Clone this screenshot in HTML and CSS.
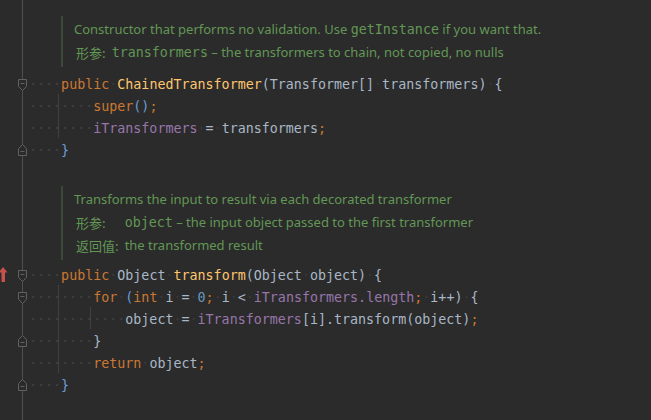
FILE: index.html
```html
<!DOCTYPE html>
<html>
<head>
<meta charset="utf-8">
<link rel="stylesheet" href="styles.css">
</head>
<body>
<div class="editor">
  <div class="doc doc1">
    <div class="dline">Constructor that performs no validation. Use <span class="dcode">getInstance</span> if you want that.</div>
    <div class="dtable">
      <span class="lbl">形参:</span><span><span class="dcode">transformers</span> – the transformers to chain, not copied, no nulls</span>
    </div>
  </div>

  <div class="line">
    <div class="gut"><span class="slot"></span><svg class="fold open" width="9" height="12" viewBox="0 0 9 12"><path d="M0.5 0.5H8.5V7.5L4.5 11.5L0.5 7.5Z"/><path d="M2.5 4.5H6.5"/></svg></div>
    <div class="code"><span class="ws">····</span><span class="kw">public</span><span class="sp">·</span><span class="fn">ChainedTransformer</span>(Transformer[]<span class="sp">·</span>transformers)<span class="sp">·</span>{</div>
  </div>
  <div class="line">
    <div class="gut"></div>
    <div class="code g1"><span class="ws">········</span><span class="kw">super</span><span class="br">()</span><span class="kw">;</span></div>
  </div>
  <div class="line">
    <div class="gut"></div>
    <div class="code g1"><span class="ws">········</span><span class="fld">iTransformers</span><span class="sp">·</span>=<span class="sp">·</span>transformers<span class="kw">;</span></div>
  </div>
  <div class="line">
    <div class="gut"><span class="slot"></span><svg class="fold close" width="9" height="12" viewBox="0 0 9 12"><path d="M0.5 11.5H8.5V4.5L4.5 0.5L0.5 4.5Z"/><path d="M2.5 7.5H6.5"/></svg></div>
    <div class="code"><span class="ws">····</span><span class="br">}</span></div>
  </div>

  <div class="doc doc2">
    <div class="dline">Transforms the input to result via each decorated transformer</div>
    <div class="dtable">
      <span class="lbl">形参:</span><span><span class="dcode">object</span> – the input object passed to the first transformer</span>
      <span class="lbl">返回值:</span><span>the transformed result</span>
    </div>
  </div>

  <div class="line">
    <div class="gut"><span class="slot"><svg class="impl" width="8" height="16" viewBox="0 0 8 16"><path d="M3 0L7.5 5.5H5V15H1.5V5.5H-1.5Z"/></svg></span><svg class="fold open" width="9" height="12" viewBox="0 0 9 12"><path d="M0.5 0.5H8.5V7.5L4.5 11.5L0.5 7.5Z"/><path d="M2.5 4.5H6.5"/></svg></div>
    <div class="code"><span class="ws">····</span><span class="kw">public</span><span class="sp">·</span><span class="ty">Object</span><span class="sp">·</span><span class="fn">transform</span>(Object<span class="sp">·</span>object)<span class="sp">·</span>{</div>
  </div>
  <div class="line">
    <div class="gut"><span class="slot"></span><svg class="fold open" width="9" height="12" viewBox="0 0 9 12"><path d="M0.5 0.5H8.5V7.5L4.5 11.5L0.5 7.5Z"/><path d="M2.5 4.5H6.5"/></svg></div>
    <div class="code g1"><span class="ws">········</span><span class="kw">for</span><span class="sp">·</span><span class="br">(</span><span class="kw">int</span><span class="sp">·</span>i<span class="sp">·</span>=<span class="sp">·</span><span class="num">0</span><span class="kw">;</span><span class="sp">·</span>i<span class="sp">·</span>&lt;<span class="sp">·</span><span class="fld">iTransformers.length</span><span class="kw">;</span><span class="sp">·</span>i++)<span class="sp">·</span>{</div>
  </div>
  <div class="line">
    <div class="gut"></div>
    <div class="code g1 g2"><span class="ws">············</span>object<span class="sp">·</span>=<span class="sp">·</span><span class="fld">iTransformers</span>[i].transform(object)<span class="kw">;</span></div>
  </div>
  <div class="line">
    <div class="gut"><span class="slot"></span><svg class="fold close" width="9" height="12" viewBox="0 0 9 12"><path d="M0.5 11.5H8.5V4.5L4.5 0.5L0.5 4.5Z"/><path d="M2.5 7.5H6.5"/></svg></div>
    <div class="code g1"><span class="ws">········</span>}</div>
  </div>
  <div class="line">
    <div class="gut"></div>
    <div class="code g1"><span class="ws">········</span><span class="kw">return</span><span class="sp">·</span>object<span class="kw">;</span></div>
  </div>
  <div class="line">
    <div class="gut"><span class="slot"></span><svg class="fold close" width="9" height="12" viewBox="0 0 9 12"><path d="M0.5 11.5H8.5V4.5L4.5 0.5L0.5 4.5Z"/><path d="M2.5 7.5H6.5"/></svg></div>
    <div class="code"><span class="ws">····</span><span class="br">}</span></div>
  </div>
</div>
</body>
</html>
```
FILE: styles.css
```css
html, body {
  margin: 0;
  padding: 0;
  background: #2b2b2b;
}
.editor {
  min-height: 420px;
  box-sizing: border-box;
  padding-top: 16px;
  background: linear-gradient(#4e4f50, #4e4f50) no-repeat 22px 0 / 1px 100%;
  overflow: hidden;
}
.doc {
  margin-left: 61px;
  border-left: 2px solid #3b4a38;
  padding: 2px 0 3px 11px;
  font-family: "Noto Sans", "Noto Sans CJK SC", sans-serif;
  font-size: 13px;
  line-height: 23px;
  color: #629755;
  white-space: nowrap;
}
.doc1 { margin-bottom: 5px; }
.doc2 { margin-top: 26px; margin-bottom: 3px; }
.dcode {
  font-family: "DejaVu Sans Mono", monospace;
  font-size: 13.33px;
}
.dtable {
  display: grid;
  grid-template-columns: auto 1fr;
  column-gap: 6px;
  padding-left: 2px;
}
.lbl {
  font-family: "Noto Sans CJK SC", sans-serif;
  font-size: 13px;
}
.line {
  display: flex;
  height: 22px;
}
.gut {
  flex: none;
  width: 29px;
  display: flex;
  align-items: flex-start;
}
.slot {
  width: 18px;
  flex: none;
  display: flex;
}
.fold {
  fill: #2b2b2b;
  stroke: #5f6163;
  stroke-width: 1;
}
.fold.open { margin-top: 7px; }
.fold.close { margin-top: 6px; }
.impl {
  margin-top: 4px;
  fill: #c7514c;
}
.code {
  box-sizing: border-box;
  height: 22px;
  padding-top: 2px;
  font-family: "DejaVu Sans Mono", monospace;
  font-size: 13.33px;
  line-height: 22px;
  white-space: pre;
  color: #a9b7c6;
}
.g1 {
  background: linear-gradient(#3f4041, #3f4041) no-repeat 29px 0 / 1px 100%;
}
.g1.g2 {
  background:
    linear-gradient(#3f4041, #3f4041) no-repeat 29px 0 / 1px 100%,
    linear-gradient(#3f4041, #3f4041) no-repeat 61px 0 / 1px 100%;
}
.ws { color: #404244; }
.sp { color: #383a3c; }
.kw { color: #cc7832; }
.fn { color: #ffc66d; }
.fld { color: #9876aa; }
.num { color: #6897bb; }
.ty { color: #a9b7c6; }
.br { color: #6d9cd6; }
```
